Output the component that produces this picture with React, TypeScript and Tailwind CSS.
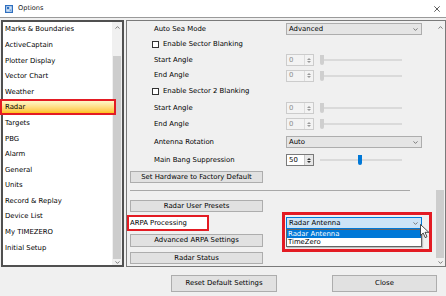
import React from "react";

const Chevron = ({ up = false }: { up?: boolean }) => (
  <svg width="5" height="3" viewBox="0 0 5 3">
    <path
      d={up ? "M0.5 2.6L2.5 0.6L4.5 2.6" : "M0.5 0.4L2.5 2.4L4.5 0.4"}
      fill="none"
      stroke="#5f5f5f"
      strokeWidth="0.8"
    />
  </svg>
);

const Combo = ({ text, active = false }: { text: string; active?: boolean }) => (
  <div
    className={`flex h-[12px] w-[136px] items-center justify-between border pl-[2px] pr-[3px] ${
      active ? "border-[#0078d7] bg-[#cce4f7]" : "border-[#adadad] bg-[#e5e5e5]"
    }`}
  >
    <span className="leading-none">{text}</span>
    <Chevron />
  </div>
);

const Spin = ({ value, on = false }: { value: string; on?: boolean }) => (
  <div
    className={`flex h-[12px] w-[28px] border ${
      on ? "border-[#7a7a7a] bg-white text-black" : "border-[#cccccc] bg-[#f3f3f3] text-[#8c8c8c]"
    }`}
  >
    <div className="flex flex-1 items-center pl-[2px] leading-none">{value}</div>
    <div
      className={`flex w-[9px] flex-col items-center justify-center gap-[1px] border-l ${
        on ? "border-[#c8c8c8] bg-[#e8e8e8]" : "border-[#dddddd]"
      }`}
    >
      <svg width="4" height="2" viewBox="0 0 4 2">
        <path d="M0 2L2 0L4 2Z" fill={on ? "#333" : "#9a9a9a"} />
      </svg>
      <svg width="4" height="2" viewBox="0 0 4 2">
        <path d="M0 0L2 2L4 0Z" fill={on ? "#333" : "#9a9a9a"} />
      </svg>
    </div>
  </div>
);

const Slider = ({ on = false }: { on?: boolean }) => (
  <div className="relative ml-[4px] flex h-[12px] w-[86px] items-center px-[2px]">
    <div className="h-[2px] w-full bg-[#dadada]" />
    <div
      className={`absolute top-[1px] h-[10px] w-[4px] rounded-b-[2px] ${
        on ? "left-[40px] bg-[#0078d7]" : "left-[2px] bg-[#cfcfcf]"
      }`}
    />
  </div>
);

const Row = ({ label, h, children }: { label: string; h: string; children?: React.ReactNode }) => (
  <div className={`flex items-center pl-[27px] ${h}`}>
    <div className="w-[132px] leading-none">{label}</div>
    {children}
  </div>
);

const Check = ({ label, h }: { label: string; h: string }) => (
  <div className={`flex items-center gap-[4px] pl-[25px] ${h}`}>
    <div className="h-[7px] w-[7px] border border-[#333333] bg-white" />
    <span className="leading-none">{label}</span>
  </div>
);

const Btn = ({ children, className = "" }: { children: React.ReactNode; className?: string }) => (
  <div className={`flex items-center justify-center border border-[#adadad] bg-[#e1e1e1] leading-none ${className}`}>
    {children}
  </div>
);

const pages = [
  "Marks & Boundaries",
  "ActiveCaptain",
  "Plotter Display",
  "Vector Chart",
  "Weather",
  "Radar",
  "Targets",
  "PBG",
  "Alarm",
  "General",
  "Units",
  "Record & Replay",
  "Device List",
  "My TIMEZERO",
  "Initial Setup",
];

export default function App() {
  return (
    <div className="flex h-[296px] w-[446px] flex-col overflow-hidden bg-[#f0f0f0] font-['DejaVu_Sans',sans-serif] text-[6.9px] text-black">
      {/* title bar */}
      <div className="flex h-[18px] items-center border-b border-[#9a9a9a] bg-white pl-[5px] pr-[6px]">
        <svg width="8" height="8" viewBox="0 0 8 8">
          <rect x="0" y="0" width="8" height="8" fill="#2f6fbf" />
          <rect x="1.2" y="1.2" width="5.6" height="5.6" fill="#cfe2f6" />
          <rect x="2" y="2" width="2.2" height="2.2" fill="#2f6fbf" />
          <rect x="4.6" y="4.4" width="1.6" height="1.6" fill="#6fa3de" />
        </svg>
        <span className="ml-[5px] text-[6.6px] text-[#222]">Options</span>
        <svg className="ml-auto" width="6" height="6" viewBox="0 0 6 6">
          <path d="M0.3 0.3L5.7 5.7M5.7 0.3L0.3 5.7" stroke="#333" strokeWidth="0.8" />
        </svg>
      </div>

      {/* panels */}
      <div className="flex h-[249px] gap-[2px] pl-[1px] pt-[2px]">
        {/* left list */}
        <div className="flex w-[123px] border-2 border-[#505050] bg-white">
          <div className="flex-1 pl-[2px]">
            {pages.map((p) =>
              p === "Radar" ? (
                <div key={p} className="relative flex h-[15.6px] items-center">
                  <div className="absolute -left-[5px] -top-[1px] h-[16px] w-[116px] border-2 border-[#e31b23] bg-linear-to-b from-[#fff8c8] to-[#ffc20e]" />
                  <span className="relative leading-none">{p}</span>
                </div>
              ) : (
                <div key={p} className="flex h-[15.6px] items-center leading-none">
                  {p}
                </div>
              )
            )}
          </div>
          <div className="flex w-[10px] flex-col bg-[#f0f0f0]">
            <div className="flex h-[10px] items-center justify-center">
              <Chevron up />
            </div>
            <div className="h-[24px]" />
            <div className="mx-[1px] flex-1 bg-[#cdcdcd]" />
            <div className="flex h-[6px] items-center justify-center">
              <Chevron />
            </div>
          </div>
        </div>

        {/* right settings */}
        <div className="flex w-[320px] border border-[#7a7a7a]">
          <div className="flex flex-1 flex-col">
            <Row label="Auto Sea Mode" h="h-[16px]">
              <Combo text="Advanced" />
            </Row>
            <Check label="Enable Sector Blanking" h="h-[15px]" />
            <Row label="Start Angle" h="h-[16px]">
              <Spin value="0" />
              <Slider />
            </Row>
            <Row label="End Angle" h="h-[15px]">
              <Spin value="0" />
              <Slider />
            </Row>
            <Check label="Enable Sector 2 Blanking" h="h-[17px]" />
            <Row label="Start Angle" h="h-[16px]">
              <Spin value="0" />
              <Slider />
            </Row>
            <Row label="End Angle" h="h-[16px]">
              <Spin value="0" />
              <Slider />
            </Row>
            <Row label="Antenna Rotation" h="h-[20px]">
              <Combo text="Auto" />
            </Row>
            <Row label="Main Bang Suppression" h="h-[16px]">
              <Spin value="50" on />
              <Slider on />
            </Row>

            <Btn className="ml-[3px] mt-[3px] h-[12px] w-[133px]">Set Hardware to Factory Default</Btn>
            <div className="ml-[3px] mt-[7px] h-px w-[280px] bg-[#a8a8a8]" />
            <Btn className="ml-[3px] mt-[9px] h-[12px] w-[133px]">Radar User Presets</Btn>

            <div className="mt-[3px] flex h-[16px] items-center">
              <div className="flex h-[16px] w-[82px] items-center border-2 border-[#e31b23] bg-white pl-[1px] leading-none">
                ARPA Processing
              </div>
              <div className="relative ml-[77px]">
                <Combo text="Radar Antenna" active />
                <div className="absolute left-0 top-[12px] flex w-[136px] flex-col border border-[#646464] bg-white shadow-[1px_1px_1px_rgba(0,0,0,0.2)]">
                  <div className="flex h-[8px] items-center bg-[#0078d7] pl-[1px] leading-none text-white">Radar Antenna</div>
                  <div className="flex h-[8px] items-center pl-[1px] leading-none">TimeZero</div>
                </div>
                <div className="absolute -left-[4px] -top-[5px] h-[40px] w-[150px] border-[3px] border-[#e31b23]" />
                <svg className="absolute left-[134px] top-[7px]" width="10" height="15" viewBox="0 0 10 15">
                  <path
                    d="M0.5 0.5L0.5 11.5L3.2 9L5.2 13.6L7 12.8L5 8.3L8.8 8.3Z"
                    fill="white"
                    stroke="#222"
                    strokeWidth="0.8"
                    strokeLinejoin="round"
                  />
                </svg>
              </div>
            </div>

            <Btn className="ml-[3px] mt-[3px] h-[13px] w-[133px]">Advanced ARPA Settings</Btn>
            <Btn className="ml-[3px] mt-[5px] h-[12px] w-[133px]">Radar Status</Btn>
          </div>

          <div className="flex w-[10px] flex-col">
            <div className="flex h-[12px] items-center justify-center">
              <Chevron up />
            </div>
            <div className="flex-1" />
            <div className="mx-[1px] h-[68px] bg-[#cdcdcd]" />
            <div className="flex h-[8px] items-center justify-center">
              <Chevron />
            </div>
          </div>
        </div>
      </div>

      {/* footer */}
      <div className="flex flex-1 items-start justify-end gap-[55px] pr-[9px] pt-[8px]">
        <Btn className="h-[17px] w-[106px]">Reset Default Settings</Btn>
        <Btn className="h-[17px] w-[105px]">Close</Btn>
      </div>
    </div>
  );
}
